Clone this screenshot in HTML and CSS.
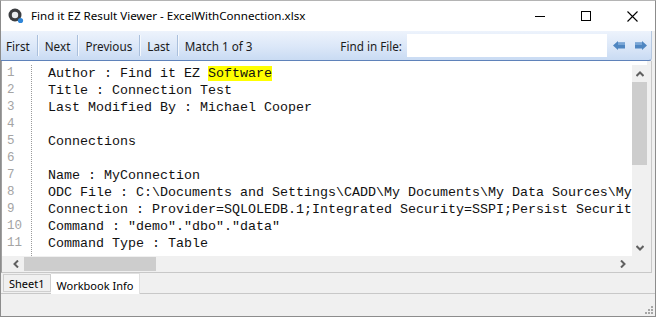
FILE: index.html
```html
<!DOCTYPE html>
<html>
<head>
    <meta charset="utf-8">
    <title>Find it EZ Result Viewer</title>
    <link rel="stylesheet" href="styles.css">
</head>
<body>
<div class="window">
    <div class="titlebar">
        <svg class="app-icon" width="16" height="16" viewBox="0 0 16 16">
            <circle cx="7" cy="7" r="6.5" fill="#3b3d40"/>
            <circle cx="7" cy="7" r="3.2" fill="#e8ecef"/>
            <circle cx="12.5" cy="12.5" r="2.6" fill="#2f86d8"/>
        </svg>
        <span class="title">Find it EZ Result Viewer - ExcelWithConnection.xlsx</span>
        <div class="win-controls">
            <span class="win-btn">
                <svg width="10" height="10" viewBox="0 0 10 10"><rect x="0" y="5" width="10" height="1" fill="#000"/></svg>
            </span>
            <span class="win-btn">
                <svg width="10" height="10" viewBox="0 0 10 10"><rect x="0.5" y="0.5" width="9" height="9" fill="none" stroke="#000"/></svg>
            </span>
            <span class="win-btn">
                <svg width="11" height="11" viewBox="0 0 11 11"><path d="M0.5 0.5 L10.5 10.5 M10.5 0.5 L0.5 10.5" stroke="#000" stroke-width="1.1"/></svg>
            </span>
        </div>
    </div>

    <div class="toolbar">
        <span class="tb-btn first">First</span>
        <span class="tb-sep"></span>
        <span class="tb-btn">Next</span>
        <span class="tb-sep"></span>
        <span class="tb-btn">Previous</span>
        <span class="tb-sep"></span>
        <span class="tb-btn">Last</span>
        <span class="tb-sep"></span>
        <span class="tb-btn">Match 1 of 3</span>
        <span class="tb-find">Find in File:</span>
        <div class="tb-input"></div>
        <svg class="tb-arrow" width="12" height="9" viewBox="0 0 12 9">
            <polygon points="0,4.5 5,0 5,1.5 12,1.5 12,7.5 5,7.5 5,9" fill="#4f86c1"/>
            <polygon points="5,1.5 12,1.5 12,4 5,4" fill="#79a6d6"/>
        </svg>
        <svg class="tb-arrow" width="12" height="9" viewBox="0 0 12 9">
            <polygon points="12,4.5 7,0 7,1.5 0,1.5 0,7.5 7,7.5 7,9" fill="#4f86c1"/>
            <polygon points="0,1.5 7,1.5 7,4 0,4" fill="#79a6d6"/>
        </svg>
    </div>

    <div class="editor">
        <div class="editor-body">
            <div class="gutter">
                <div>1</div><div>2</div><div>3</div><div>4</div><div>5</div><div>6</div>
                <div>7</div><div>8</div><div>9</div><div>10</div><div>11</div>
            </div>
            <div class="code">
                <div class="line">Author : Find it EZ <span class="hit">Software</span></div>
                <div class="line">Title : Connection Test</div>
                <div class="line">Last Modified By : Michael Cooper</div>
                <div class="line"></div>
                <div class="line">Connections</div>
                <div class="line"></div>
                <div class="line">Name : MyConnection</div>
                <div class="line">ODC File : C:\Documents and Settings\CADD\My Documents\My Data Sources\My</div>
                <div class="line">Connection : Provider=SQLOLEDB.1;Integrated Security=SSPI;Persist Securit</div>
                <div class="line">Command : "demo"."dbo"."data"</div>
                <div class="line">Command Type : Table</div>
            </div>
            <div class="vscroll">
                <div class="sb-btn">
                    <svg width="8" height="6" viewBox="0 0 8 6"><polyline points="0.5,5 4,1.5 7.5,5" fill="none" stroke="#606060" stroke-width="2"/></svg>
                </div>
                <div class="sb-thumb-v"></div>
                <div class="sb-track"></div>
                <div class="sb-btn">
                    <svg width="8" height="6" viewBox="0 0 8 6"><polyline points="0.5,1 4,4.5 7.5,1" fill="none" stroke="#606060" stroke-width="2"/></svg>
                </div>
            </div>
        </div>
        <div class="hscroll-row">
            <div class="hscroll">
                <div class="sb-btn-h">
                    <svg width="6" height="8" viewBox="0 0 6 8"><polyline points="5,0.5 1.5,4 5,7.5" fill="none" stroke="#606060" stroke-width="2"/></svg>
                </div>
                <div class="sb-thumb-h"></div>
                <div class="sb-track"></div>
                <div class="sb-btn-h">
                    <svg width="6" height="8" viewBox="0 0 6 8"><polyline points="1,0.5 4.5,4 1,7.5" fill="none" stroke="#606060" stroke-width="2"/></svg>
                </div>
            </div>
        </div>
    </div>

    <div class="tabs">
        <span class="tab">Sheet1</span>
        <span class="tab active">Workbook Info</span>
    </div>

    <div class="statusbar">
        <svg class="grip" width="8" height="8" viewBox="0 0 8 8">
            <rect x="6" y="0" width="2" height="2" fill="#a6a6a6"/>
            <rect x="3" y="3" width="2" height="2" fill="#a6a6a6"/>
            <rect x="6" y="3" width="2" height="2" fill="#a6a6a6"/>
            <rect x="0" y="6" width="2" height="2" fill="#a6a6a6"/>
            <rect x="3" y="6" width="2" height="2" fill="#a6a6a6"/>
            <rect x="6" y="6" width="2" height="2" fill="#a6a6a6"/>
        </svg>
    </div>
</div>
</body>
</html>
```

FILE: styles.css
```css
html, body {
    margin: 0;
    padding: 0;
    background: #ffffff;
}

body {
    font-family: "Noto Sans", "Liberation Sans", sans-serif;
    font-size: 12px;
    color: #000;
}

.window {
    width: 656px;
    height: 317px;
    box-sizing: border-box;
    border: 1px solid #8c8c8c;
    border-top-color: #b4b4b4;
    background: #f0f0f0;
    display: flex;
    flex-direction: column;
    overflow: hidden;
}

/* title bar */
.titlebar {
    height: 30px;
    flex: none;
    background: #ffffff;
    display: flex;
    align-items: center;
    padding-left: 7px;
}
.app-icon {
    flex: none;
}
.title {
    margin-left: 7px;
    margin-top: -1px;
    font-size: 11.6px;
}
.win-controls {
    margin-left: auto;
    display: flex;
    align-self: stretch;
}
.win-btn {
    width: 46px;
    display: flex;
    align-items: center;
    justify-content: center;
}

/* toolbar */
.toolbar {
    height: 29px;
    flex: none;
    margin-right: 3px;
    background: linear-gradient(#edf3fc, #dbe7f8 55%, #c9dbf3);
    border-bottom: 1px solid #5f82ba;
    border-right: 1px solid #b6c8e0;
    border-bottom-right-radius: 3px;
    display: flex;
    align-items: center;
    color: #1b1b1b;
    font-size: 11.7px;
}
.tb-btn {
    padding: 0 7px;
}
.tb-btn.first {
    padding-left: 5px;
}
.tb-sep {
    width: 1px;
    height: 21px;
    background: #a9bfdc;
    box-shadow: 1px 0 0 #f4f8fd;
}
.tb-find {
    margin-left: auto;
}
.tb-input {
    width: 200px;
    height: 23px;
    margin-left: 5px;
    background: #ffffff;
}
.tb-arrow {
    margin-left: 6px;
}
.tb-arrow:last-child {
    margin-left: 10px;
    margin-right: 4px;
}

/* editor */
.editor {
    flex: none;
    margin-right: 3px;
    border-left: 1px solid #a0a0a0;
    border-right: 1px solid #c8c8c8;
    border-bottom: 1px solid #c8c8c8;
    display: flex;
    flex-direction: column;
}
.editor-body {
    height: 191px;
    padding-top: 4px;
    background: #ffffff;
    display: flex;
    border-right: 4px solid #f0f0f0;
}
.gutter {
    width: 24px;
    padding-left: 5px;
    border-right: 1px dotted #9a9a9a;
    font-family: "Liberation Mono", monospace;
    font-size: 12.5px;
    line-height: 17px;
    color: #a4a4a4;
    overflow: hidden;
}
.code {
    flex: 1;
    min-width: 0;
    padding-left: 16px;
    font-family: "Liberation Mono", monospace;
    font-size: 13.33px;
    line-height: 17px;
    overflow: hidden;
    color: #111;
}
.line {
    height: 17px;
    white-space: pre;
}
.hit {
    background: #ffff00;
}
.vscroll {
    width: 15px;
    flex: none;
    display: flex;
    flex-direction: column;
    background: #f0f0f0;
}
.sb-btn {
    height: 17px;
    flex: none;
    display: flex;
    align-items: center;
    justify-content: center;
}
.sb-thumb-v {
    height: 83px;
    flex: none;
    background: #cdcdcd;
}
.sb-track {
    flex: 1;
}
.hscroll-row {
    height: 16px;
    display: flex;
    padding-left: 5px;
    padding-right: 20px;
    background: #f0f0f0;
}
.hscroll {
    flex: 1;
    display: flex;
}
.sb-btn-h {
    width: 17px;
    flex: none;
    display: flex;
    align-items: center;
    justify-content: center;
}
.sb-thumb-h {
    width: 132px;
    flex: none;
    margin: 1px 0;
    background: #cdcdcd;
}

/* sheet tabs */
.tabs {
    height: 20px;
    flex: none;
    border-bottom: 1px solid #c8c8c8;
    display: flex;
    align-items: flex-end;
    padding-left: 2px;
    font-size: 11px;
}
.tab {
    height: 18px;
    display: flex;
    align-items: center;
    padding: 0 5px;
    border: 1px solid #cfcfcf;
    margin-bottom: 1px;
    box-sizing: border-box;
}
.tab.active {
    height: 21px;
    padding: 2px 6px 0;
    margin-bottom: -1px;
    background: #ffffff;
    border-color: #e0e0e0;
    border-left: none;
    border-bottom: none;
}

/* status bar */
.statusbar {
    flex: 1;
    display: flex;
    justify-content: flex-end;
    align-items: flex-end;
    padding: 0 2px 2px 0;
}
```
